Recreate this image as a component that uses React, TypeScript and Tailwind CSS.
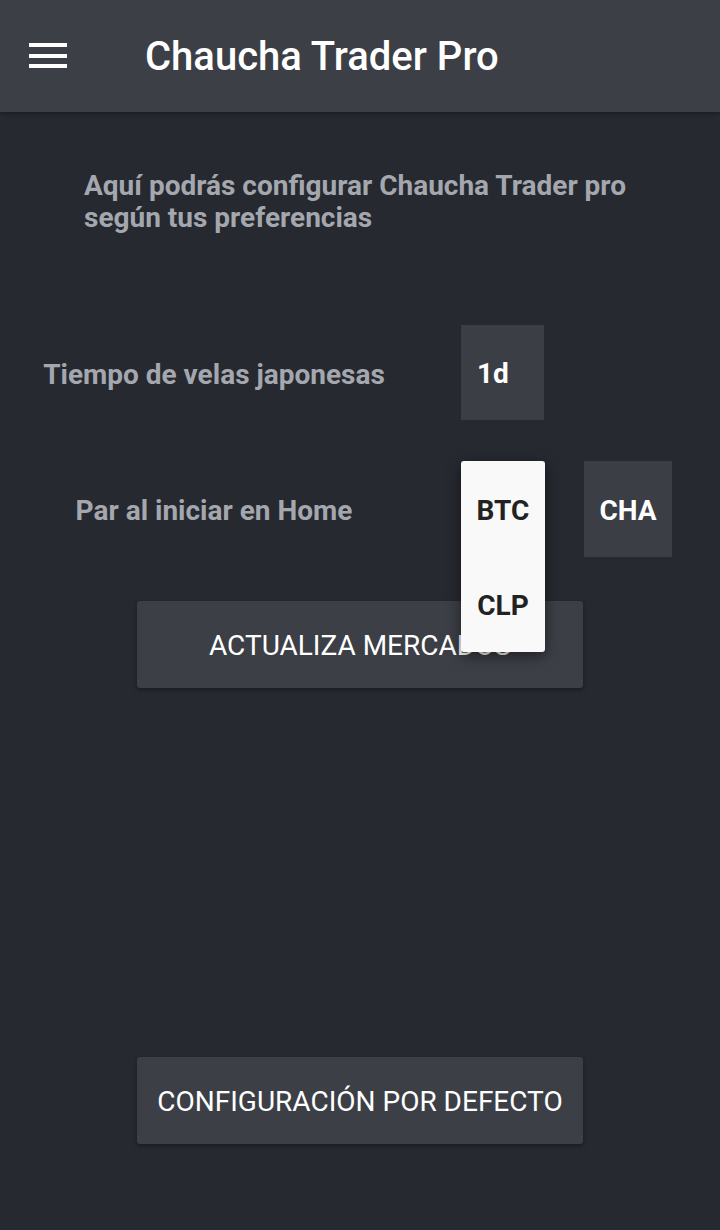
import { useState } from "react";

function MenuIcon() {
  return (
    <svg width="38" height="26" viewBox="0 0 38 26" className="block">
      <rect x="0" y="0" width="38" height="4" fill="#ffffff" />
      <rect x="0" y="11" width="38" height="4" fill="#ffffff" />
      <rect x="0" y="21" width="38" height="4" fill="#ffffff" />
    </svg>
  );
}

function ActionButton({ label }: { label: string }) {
  return (
    <button className="mx-auto flex h-[87px] w-[446px] items-center justify-center rounded-[3px] bg-[#3c3f46] pt-[3px] text-[28px] font-normal uppercase text-white shadow-[0_2px_4px_rgba(0,0,0,0.35)]">
      {label}
    </button>
  );
}

export default function App() {
  const [pair] = useState({ base: "BTC", quote: "CHA" });

  return (
    <div className="flex h-[1230px] w-[720px] flex-col overflow-hidden bg-[#262930] font-['Roboto',_'Liberation_Sans',_sans-serif]">
      <header className="flex h-[112px] shrink-0 items-center bg-[#3c3f46] shadow-[0_2px_4px_rgba(0,0,0,0.3)]">
        <div className="ml-[29px]">
          <MenuIcon />
        </div>
        <h1 className="ml-[78px] pt-[2px] text-[40px] font-medium leading-none text-white">Chaucha Trader Pro</h1>
      </header>

      <main className="flex flex-1 flex-col">
        <p className="ml-[84px] mt-[58px] w-[600px] text-[28px] font-bold leading-[32px] text-[#a4a7ae]">
          Aquí podrás configurar Chaucha Trader pro según tus preferencias
        </p>

        <div className="mt-[91px] flex items-center">
          <span className="w-[428px] pt-[4px] text-center text-[28px] font-bold text-[#a4a7ae]">Tiempo de velas japonesas</span>
          <div className="ml-[33px] flex h-[95px] w-[83px] items-center bg-[#3b3e45] pl-[16px] pt-[3px] text-[28px] font-bold text-white">
            1d
          </div>
        </div>

        <div className="mt-[41px] flex items-center">
          <span className="w-[428px] pt-[4px] text-center text-[28px] font-bold text-[#a4a7ae]">Par al iniciar en Home</span>
          <div className="relative ml-[33px] h-[96px] w-[84px] bg-[#3b3e45]">
            <div className="absolute left-0 top-0 z-10 flex h-[191px] w-[84px] flex-col rounded-[3px] bg-[#f9f9f9] shadow-[0_4px_14px_rgba(0,0,0,0.5)]">
              <div className="flex h-[96px] items-center justify-center pt-[3px] text-[28px] font-bold text-[#222]">{pair.base}</div>
              <div className="flex h-[95px] items-center justify-center pt-[2px] text-[28px] font-bold text-[#222]">CLP</div>
            </div>
          </div>
          <div className="ml-[39px] flex h-[96px] w-[88px] items-center justify-center bg-[#3b3e45] pt-[3px] text-[28px] font-bold text-white">
            {pair.quote}
          </div>
        </div>

        <div className="mt-[44px]">
          <ActionButton label="Actualiza mercados" />
        </div>

        <div className="mt-[369px]">
          <ActionButton label="Configuración por defecto" />
        </div>
      </main>
    </div>
  );
}
